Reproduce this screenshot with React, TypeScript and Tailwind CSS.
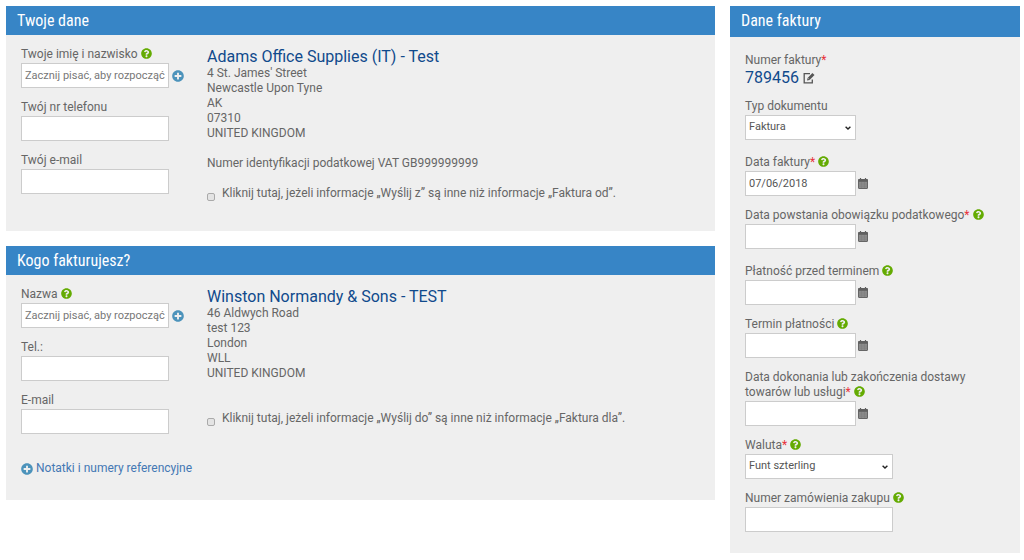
import { ReactNode, useId, useState } from 'react';
import { FaPlusCircle, FaQuestionCircle } from 'react-icons/fa';

const inputClass =
  'h-[25px] border border-[#ccc] bg-white px-[3px] text-[11px] text-[#555] placeholder:text-[#777] outline-none focus:border-[#3785c6]';

const HelpIcon = () => <FaQuestionCircle className="ml-[3px] inline-block size-[11px] align-[-1px] text-[#64ab02]" />;

const PlusIcon = () => <FaPlusCircle className="size-3 shrink-0 text-[#4c93bb]" />;

const CalendarIcon = () => (
  <svg viewBox="0 0 10 11" className="h-[11px] w-[10px]" fill="none">
    <rect x="0.5" y="1.5" width="9" height="9" rx="0.5" fill="#8c8c8c" stroke="#666" />
    <path d="M0.3 1.2h9.4v2.6H0.3z" fill="#606060" />
    <path d="M2.5 0v2M7.5 0v2" stroke="#606060" strokeWidth="1.2" />
    <path d="M1 6h8M1 8.2h8M3.5 4v6M6.5 4v6" stroke="#7c7c7c" strokeWidth="0.5" />
  </svg>
);

const EditIcon = () => (
  <svg viewBox="0 0 12 12" className="h-3 w-3" fill="none">
    <path d="M7 1.7H1.2v9.1h8.1V7.6" stroke="#555" strokeWidth="1.3" />
    <path d="M4 8.6l.6-2.6L9.4 1l2.1 2-4.9 5z" fill="#555" />
    <path d="M5.2 6.3l1.1 1.1" stroke="#efefef" strokeWidth="0.6" />
  </svg>
);

interface LabelProps {
  htmlFor: string;
  label: string;
  required?: boolean;
  help?: boolean;
}

const FieldLabel = ({ htmlFor, label, required, help }: LabelProps) => (
  <label htmlFor={htmlFor} className="block leading-[15px]">
    {label}
    {required && <span className="text-[#e8303a]">*</span>}
    {help && <HelpIcon />}
  </label>
);

interface FieldProps {
  label: string;
  required?: boolean;
  help?: boolean;
  placeholder?: string;
  defaultValue?: string;
  type?: string;
  wide?: boolean;
  action?: ReactNode;
}

const TextField = ({ label, required, help, placeholder, defaultValue, type = 'text', wide, action }: FieldProps) => {
  const id = useId();

  return (
    <div className="flex flex-col gap-px">
      <FieldLabel htmlFor={id} label={label} required={required} help={help} />
      <div className="flex items-center">
        <input
          id={id}
          type={type}
          placeholder={placeholder}
          defaultValue={defaultValue}
          className={`${inputClass} ${wide ? 'w-[148px]' : 'w-[111px]'}`}
        />
        {action}
      </div>
    </div>
  );
};

const DateField = (props: FieldProps) => (
  <TextField
    {...props}
    action={
      <button type="button" aria-label="Kalendarz" className="ml-0.5">
        <CalendarIcon />
      </button>
    }
  />
);

const SelectField = ({ label, required, help, wide, options }: FieldProps & { options: string[] }) => {
  const id = useId();

  return (
    <div className="flex flex-col gap-px">
      <FieldLabel htmlFor={id} label={label} required={required} help={help} />
      <div className={`relative ${wide ? 'w-[148px]' : 'w-[111px]'}`}>
        <select id={id} className={`${inputClass} block w-full appearance-none`}>
          {options.map((o) => (
            <option key={o}>{o}</option>
          ))}
        </select>
        <svg viewBox="0 0 6 4" className="pointer-events-none absolute top-[11px] right-[5px] h-1 w-1.5" fill="none">
          <path d="M0.6 0.7L3 3l2.4-2.3" stroke="#222" strokeWidth="1.4" />
        </svg>
      </div>
    </div>
  );
};

const PanelTitle = ({ children, tall }: { children: ReactNode; tall?: boolean }) => (
  <h2
    className={`bg-[#3785c6] px-[11px] pt-1 font-['Roboto_Condensed',Roboto,sans-serif] text-base leading-[21px] text-white ${
      tall ? 'pb-1.5' : 'pb-1'
    }`}
  >
    {children}
  </h2>
);

interface PartyProps {
  title: string;
  nameLabel: string;
  phoneLabel: string;
  emailLabel: string;
  company: string;
  address: string[];
  vat?: string;
  shipLabel: string;
  children?: ReactNode;
}

const PartyPanel = ({ title, nameLabel, phoneLabel, emailLabel, company, address, vat, shipLabel, children }: PartyProps) => {
  const [shipDiffers, setShipDiffers] = useState(false);

  return (
    <section className="bg-[#efefef]">
      <PanelTitle>{title}</PanelTitle>
      <div className="flex px-[15px] pt-3">
        <div className="flex w-[186px] shrink-0 flex-col gap-3">
          <TextField
            wide
            help
            label={nameLabel}
            placeholder="Zacznij pisać, aby rozpocząć wyszukiwanie"
            action={
              <button type="button" aria-label="Dodaj" className="ml-[3px]">
                <PlusIcon />
              </button>
            }
          />
          <TextField wide label={phoneLabel} type="tel" />
          <TextField wide label={emailLabel} type="email" />
        </div>
        <div className="min-w-0 flex-1 leading-[15px]">
          <h3 className="text-base leading-[19px] text-[#104a8c]">{company}</h3>
          <address className="not-italic">
            {address.map((line) => (
              <div key={line}>{line}</div>
            ))}
          </address>
          {vat && <p className="mt-[15px]">Numer identyfikacji podatkowej VAT {vat}</p>}
          <label className={`flex items-start gap-[7px] ${vat ? 'mt-[15px]' : 'mt-[30px]'}`}>
            <input
              type="checkbox"
              checked={shipDiffers}
              onChange={(e) => setShipDiffers(e.target.checked)}
              className="mt-[7px] size-2 shrink-0 appearance-none rounded-[2px] border border-[#aaa] bg-[#e4e4e4] checked:bg-[#3785c6]"
            />
            {shipLabel}
          </label>
        </div>
      </div>
      {children}
    </section>
  );
};

export default function App() {
  return (
    <main className="flex items-start gap-[15px] bg-white py-1.5 pr-1 pl-1.5 font-[Roboto,sans-serif] text-xs text-[#666]">
      <div className="flex min-w-0 flex-1 flex-col gap-[15px]">
        <PartyPanel
          title="Twoje dane"
          nameLabel="Twoje imię i nazwisko"
          phoneLabel="Twój nr telefonu"
          emailLabel="Twój e-mail"
          company="Adams Office Supplies (IT) - Test"
          address={["4 St. James' Street", 'Newcastle Upon Tyne', 'AK', '07310', 'UNITED KINGDOM']}
          vat="GB999999999"
          shipLabel="Kliknij tutaj, jeżeli informacje „Wyślij z” są inne niż informacje „Faktura od”."
        >
          <div className="h-[30px]" />
        </PartyPanel>
        <PartyPanel
          title="Kogo fakturujesz?"
          nameLabel="Nazwa"
          phoneLabel="Tel.:"
          emailLabel="E-mail"
          company="Winston Normandy & Sons - TEST"
          address={['46 Aldwych Road', 'test 123', 'London', 'WLL', 'UNITED KINGDOM']}
          shipLabel="Kliknij tutaj, jeżeli informacje „Wyślij do” są inne niż informacje „Faktura dla”."
        >
          <div className="px-[15px] pt-[27px] pb-[21px]">
            <a href="#notatki" className="inline-flex items-center gap-[3px] leading-[15px] text-[#4478b4]">
              <PlusIcon />
              Notatki i numery referencyjne
            </a>
          </div>
        </PartyPanel>
      </div>

      <section className="w-[290px] shrink-0 bg-[#efefef]">
        <PanelTitle tall>Dane faktury</PanelTitle>
        <div className="flex flex-col gap-3 px-[15px] pt-4 pb-[21px]">
          <div>
            <div className="leading-[15px]">
              Numer faktury<span className="text-[#e8303a]">*</span>
            </div>
            <div className="flex items-center gap-1 text-base leading-[19px] text-[#104a8c]">
              789456
              <button type="button" aria-label="Edytuj">
                <EditIcon />
              </button>
            </div>
          </div>
          <SelectField label="Typ dokumentu" options={['Faktura', 'Nota kredytowa']} />
          <div className="mt-[3px]">
            <DateField label="Data faktury" required help defaultValue="07/06/2018" />
          </div>
          <DateField label="Data powstania obowiązku podatkowego" required help />
          <div className="mt-[3px]">
            <DateField label="Płatność przed terminem" help />
          </div>
          <DateField label="Termin płatności" help />
          <DateField label="Data dokonania lub zakończenia dostawy towarów lub usługi" required help />
          <SelectField wide label="Waluta" required help options={['Funt szterling', 'Euro', 'Złoty polski']} />
          <TextField wide label="Numer zamówienia zakupu" help />
        </div>
      </section>
    </main>
  );
}
